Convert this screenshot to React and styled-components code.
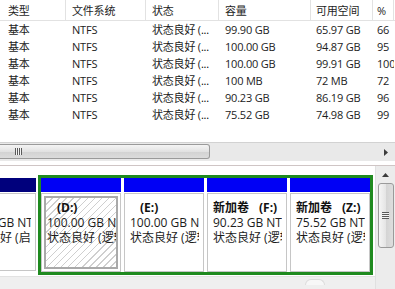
import React from 'react';
import styled, { createGlobalStyle, css } from 'styled-components';

const Global = createGlobalStyle`
  html, body { margin: 0; padding: 0; background: #fff; }
  body { font-family: "Open Sans", "Noto Sans CJK SC", sans-serif; }
  #root { width: 395px; height: 289px; overflow: hidden; }
`;

const Window = styled.div`
  width: 395px;
  height: 289px;
  display: flex;
  flex-direction: column;
  overflow: hidden;
  background: #fff;
  font-size: 11px;
  color: #1c1c1c;
`;

const ListPane = styled.div`
  height: 142px;
  overflow: hidden;
  flex: none;
  letter-spacing: -0.2px;
`;

const HeaderRow = styled.div`
  display: flex;
  height: 21px;
  border-bottom: 1px solid #e2e2e2;
  box-sizing: border-box;
  background: #fff;
`;

const HeaderCell = styled.div`
  flex: none;
  box-sizing: border-box;
  width: ${p => p.$w}px;
  padding-left: ${p => p.$p}px;
  padding-top: 2px;
  line-height: 18px;
  border-right: 1px solid #e2e2e2;
  white-space: nowrap;
  overflow: hidden;
  color: #1e1e1e;
`;

const Row = styled.div`
  display: flex;
  height: 17px;
  line-height: 17px;
`;

const Cell = styled.div`
  flex: none;
  box-sizing: border-box;
  width: ${p => p.$w}px;
  padding-left: ${p => p.$p}px;
  white-space: nowrap;
  overflow: hidden;
`;

const Dots = styled.span`
  color: #000;
`;

const HScroll = styled.div`
  flex: none;
  height: 19px;
  display: flex;
  align-items: stretch;
  background: #e9e9e9;
  border-top: 1px solid #d2d2d2;
  box-sizing: border-box;
`;

const HThumb = styled.div`
  width: 210px;
  margin: 1px 0 2px;
  box-sizing: border-box;
  border: 1px solid #9a9a9a;
  border-left: none;
  border-radius: 0 3px 3px 0;
  background: linear-gradient(#f4f4f4, #e2e2e2 50%, #d2d2d2 51%, #dcdcdc);
  display: flex;
  align-items: center;
  padding-left: 15px;
`;

const GripV = styled.div`
  width: 7px;
  height: 7px;
  background: repeating-linear-gradient(90deg, #5a5a5a 0 1px, #f4f4f4 1px 2px);
`;

const HTrack = styled.div`
  flex: 1;
`;

const ArrowBtn = styled.div`
  flex: none;
  width: ${p => p.$w || 18}px;
  height: ${p => p.$h || 'auto'};
  display: flex;
  align-items: center;
  justify-content: center;
`;

const Splitter = styled.div`
  flex: none;
  height: 5px;
  background: #fff;
  border-bottom: 1px solid #cfc5c5;
  box-sizing: border-box;
`;

const LowerPane = styled.div`
  flex: 1;
  display: flex;
  min-height: 0;
`;

const LowerMain = styled.div`
  flex: 1;
  display: flex;
  flex-direction: column;
  min-width: 0;
`;

const DiskArea = styled.div`
  height: 110px;
  padding-top: 9px;
  box-sizing: border-box;
  overflow: hidden;
  background: #fff;
  font-size: 12px;
`;

const DiskStrip = styled.div`
  display: flex;
  align-items: flex-start;
  margin-left: -42px;
  gap: 2px;
`;

const Extended = styled.div`
  width: 335px;
  height: 100px;
  box-sizing: border-box;
  border: 3px solid #1f8a1f;
  display: flex;
  gap: 3px;
  flex: none;
`;

const Partition = styled.div`
  flex: ${p => (p.$w ? 'none' : '1')};
  width: ${p => (p.$w ? `${p.$w}px` : 'auto')};
  min-width: 0;
  display: flex;
  flex-direction: column;
  height: ${p => (p.$h ? `${p.$h}px` : 'auto')};
  margin-top: ${p => p.$mt || 0}px;
`;

const Bar = styled.div`
  flex: none;
  height: 14px;
  background: ${p => (p.$primary ? '#00007c' : '#0000f5')};
`;

const Body = styled.div`
  flex: 1;
  margin-top: 1px;
  border: 1px solid #c6c6c6;
  padding: 2px;
  display: flex;
  min-height: 0;
`;

const Inner = styled.div`
  flex: 1;
  min-width: 0;
  border: 2px solid transparent;
  padding: 2px 0 0 1px;
  overflow: hidden;
  white-space: nowrap;
  line-height: 15px;
  ${p =>
    p.$selected &&
    css`
      border-color: #a9a9a9;
      background: repeating-linear-gradient(135deg, #ffffff 0 4px, #cfcfcf 4px 5px);
    `}
`;

const Label = styled.div`
  font-weight: 700;
  color: #111;
`;

const Drive = styled.span`
  margin-left: 10px;
`;

const Line = styled.div`
  color: #1c1c1c;
`;

const BottomBar = styled.div`
  flex: 1;
  background: #efefef;
  border-top: 1px solid #e2e2e2;
  position: relative;
`;

const Bump = styled.div`
  position: absolute;
  left: 305px;
  top: 2px;
  width: 18px;
  height: 5px;
  border-radius: 9px 9px 0 0;
  border: 1px solid #dcdcdc;
  border-bottom: none;
  background: #f7f7f7;
`;

const VScroll = styled.div`
  flex: none;
  width: 20px;
  display: flex;
  flex-direction: column;
  align-items: center;
  background: #ececec;
  border-left: 1px solid #e0e0e0;
  box-sizing: border-box;
`;

const VThumb = styled.div`
  width: 16px;
  height: 65px;
  box-sizing: border-box;
  border: 1px solid #9a9a9a;
  border-radius: 3px;
  background: linear-gradient(90deg, #f5f5f5, #e4e4e4 50%, #d4d4d4 51%, #dedede);
  display: flex;
  align-items: center;
  justify-content: center;
`;

const GripH = styled.div`
  width: 7px;
  height: 7px;
  background: repeating-linear-gradient(180deg, #5a5a5a 0 1px, #f4f4f4 1px 2px);
`;

const cols = [
  { w: 66, p: 8 },
  { w: 80, p: 6 },
  { w: 73, p: 6 },
  { w: 92, p: 6 },
  { w: 62, p: 5 },
  { w: 21, p: 4 },
  { w: 30, p: 4 },
];

const headers = ['类型', '文件系统', '状态', '容量', '可用空间', '%', ''];

const rows = [
  ['基本', 'NTFS', '状态良好 (', '99.90 GB', '65.97 GB', '66'],
  ['基本', 'NTFS', '状态良好 (', '100.00 GB', '94.87 GB', '95'],
  ['基本', 'NTFS', '状态良好 (', '100.00 GB', '99.91 GB', '100'],
  ['基本', 'NTFS', '状态良好 (', '100 MB', '72 MB', '72'],
  ['基本', 'NTFS', '状态良好 (', '90.23 GB', '86.19 GB', '96'],
  ['基本', 'NTFS', '状态良好 (', '75.52 GB', '74.98 GB', '99'],
];

const logical = [
  { name: '', drive: '(D:)', size: '100.00 GB NTFS', selected: true },
  { name: '', drive: '(E:)', size: '100.00 GB NTFS' },
  { name: '新加卷', drive: '(F:)', size: '90.23 GB NTFS' },
  { name: '新加卷', drive: '(Z:)', size: '75.52 GB NTFS' },
];

const RightArrow = () => (
  <svg width="5" height="7" viewBox="0 0 5 7">
    <path d="M0 0 L4 3.5 L0 7 Z" fill="#3c3c3c" />
  </svg>
);

const UpArrow = () => (
  <svg width="7" height="4" viewBox="0 0 7 4">
    <path d="M0 4 L3.5 0 L7 4 Z" fill="#3c3c3c" />
  </svg>
);

function PartitionBody({ p }) {
  return (
    <Body>
      <Inner $selected={p.selected}>
        <Label>
          {p.name}
          <Drive>{p.drive}</Drive>
        </Label>
        <Line>{p.size}</Line>
        <Line>{p.status || '状态良好 (逻辑驱动器)'}</Line>
      </Inner>
    </Body>
  );
}

export default function App() {
  return (
    <>
      <Global />
      <Window>
        <ListPane>
          <HeaderRow>
            {headers.map((h, i) => (
              <HeaderCell key={i} $w={cols[i].w} $p={cols[i].p}>
                {h}
              </HeaderCell>
            ))}
          </HeaderRow>
          {rows.map((r, ri) => (
            <Row key={ri}>
              {r.map((c, ci) => (
                <Cell key={ci} $w={cols[ci].w} $p={cols[ci].p}>
                  {c}
                  {ci === 2 && <Dots>...</Dots>}
                </Cell>
              ))}
            </Row>
          ))}
        </ListPane>
        <HScroll>
          <HThumb>
            <GripV />
          </HThumb>
          <HTrack />
          <ArrowBtn $w={18}>
            <RightArrow />
          </ArrowBtn>
        </HScroll>
        <Splitter />
        <LowerPane>
          <LowerMain>
            <DiskArea>
              <DiskStrip>
                <Partition $w={78} $h={93} $mt={3}>
                  <Bar $primary />
                  <PartitionBody
                    p={{
                      name: '',
                      drive: '(C:)',
                      size: '99.90 GB NTFS',
                      status: '状态良好 (启动, 页面文件, 故障转储, 主分区)',
                    }}
                  />
                </Partition>
                <Extended>
                  {logical.map((p, i) => (
                    <Partition key={i}>
                      <Bar />
                      <PartitionBody p={p} />
                    </Partition>
                  ))}
                </Extended>
              </DiskStrip>
            </DiskArea>
            <BottomBar>
              <Bump />
            </BottomBar>
          </LowerMain>
          <VScroll>
            <ArrowBtn $w={18} $h="17px">
              <UpArrow />
            </ArrowBtn>
            <VThumb>
              <GripH />
            </VThumb>
          </VScroll>
        </LowerPane>
      </Window>
    </>
  );
}
